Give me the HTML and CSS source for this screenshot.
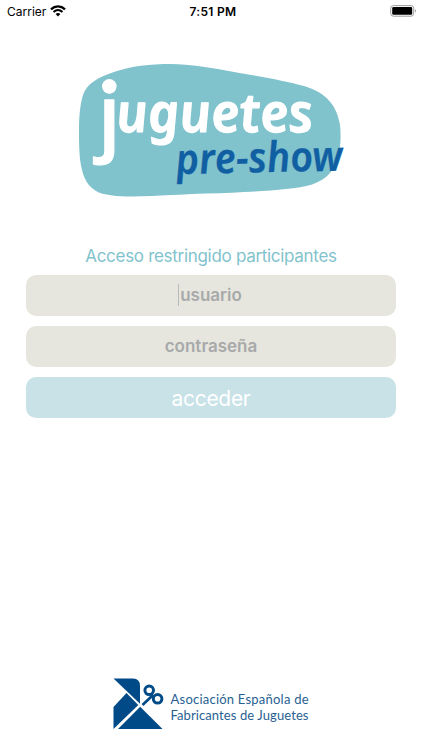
FILE: index.html
```html
<!DOCTYPE html>
<html lang="es">
<head>
    <meta charset="UTF-8">
    <meta name="viewport" content="width=device-width, initial-scale=1.0">
    <title>juguetes pre-show</title>
    <link rel="stylesheet" href="styles.css">
</head>
<body>
    <header class="status-bar">
        <div class="carrier">
            <span class="carrier-name">Carrier</span>
            <svg class="wifi" width="16" height="12" viewBox="0 0 16 12">
                <path d="M1 4.3C5 .5 11 .5 15 4.3" fill="none" stroke="#000" stroke-width="2.3"/>
                <path d="M3.5 7C6.2 4.6 9.8 4.6 12.5 7" fill="none" stroke="#000" stroke-width="2.1"/>
                <path d="M5.6 9Q8 7.1 10.4 9L8 11.5Z"/>
            </svg>
        </div>
        <span class="clock">7:51 PM</span>
        <svg class="battery" width="27" height="12" viewBox="0 0 27 12">
            <rect x=".7" y=".6" width="23" height="10.6" rx="2.7" fill="#fff" stroke="#9b9b9b"/>
            <rect x="2.2" y="2.1" width="20" height="7.6" rx="1.3"/>
            <path d="M25 4Q27 5.9 25 7.8Z" fill="#9b9b9b"/>
        </svg>
    </header>

    <main class="wrapper">
        <svg class="logo" width="272" height="140" viewBox="75 60 272 140">
            <path d="M79 130C79 117 80 105 83 95C87 83 99 77 114 72C131 66 150 64 171 64C189 64 213 68 234 72C263 77 286 81 304 86C328 93 337 107 340 125C342 145 339 162 330 173C321 184 306 187 286 189C251 193 201 193 152 196C129 197 106 197 96 191C85 184 82 174 80 159C79 149 79 140 79 130Z" fill="#81c3cd"/>
            <text class="logo-j" transform="translate(98 145)">j</text>
            <circle cx="109.3" cy="86.3" r="7.3" fill="#fff"/>
            <text class="logo-juguetes" transform="translate(118 132) skewX(7)" textLength="197" lengthAdjust="spacingAndGlyphs">uguetes</text>
            <text class="logo-show" transform="translate(177 174) rotate(-1.2) skewX(5)" textLength="167" lengthAdjust="spacingAndGlyphs">pre-show</text>
        </svg>

        <p class="intro">Acceso restringido participantes</p>

        <form class="login">
            <div class="field">
                <input type="text" placeholder="usuario" aria-label="usuario">
                <span class="caret"></span>
            </div>
            <div class="field">
                <input type="password" placeholder="contraseña" aria-label="contraseña">
            </div>
            <button type="button">acceder</button>
        </form>
    </main>

    <footer class="footer">
        <svg class="bird" width="51" height="52" viewBox="0 0 51 52">
            <g fill="#004b87">
                <path d="M3 .5H20Q27 .5 27 8V25.7L.5 .5Z"/>
                <path d="M13.5 15L25.3 27L.5 51V29Z"/>
                <path d="M27.2 28.7L49.5 51H5Z"/>
            </g>
            <g fill="none" stroke="#004b87">
                <path d="M29.5 27L40 17" stroke-width="2.7"/>
                <circle cx="36.2" cy="12.3" r="4.3" stroke-width="3"/>
                <circle cx="44.6" cy="20.8" r="4.3" stroke-width="3"/>
            </g>
        </svg>
        <svg class="association" width="144" height="36" viewBox="0 0 144 36">
            <text x=".5" y="15" textLength="138">Asociación Española de</text>
            <text x=".5" y="31" textLength="138">Fabricantes de Juguetes</text>
        </svg>
    </footer>
</body>
</html>
```

FILE: styles.css
```css
* {
    box-sizing: border-box;
}

body {
    margin: 0;
    height: 750px;
    display: flex;
    flex-direction: column;
    background-color: #fff;
    font-family: Inter, "Liberation Sans", sans-serif;
    overflow: hidden;
}

/* Status bar */
.status-bar {
    display: grid;
    grid-template-columns: 1fr auto 1fr;
    align-items: center;
    height: 22px;
    padding: 0 5px 0 7px;
    font-size: 12px;
    color: #000;
}

.carrier {
    display: flex;
    align-items: center;
    gap: 4px;
}

.clock {
    padding-left: 2px;
    font-weight: 600;
    letter-spacing: 0.3px;
}

.battery {
    justify-self: end;
}

/* Logo and form */
.wrapper {
    flex: 1;
    display: flex;
    flex-direction: column;
    align-items: center;
    padding: 38px 26px 0;
}

.logo {
    display: block;
    overflow: visible;
}

.logo-j,
.logo-juguetes,
.logo-show {
    font-family: "Noto Sans", sans-serif;
    font-weight: 600;
    font-style: italic;
    stroke-linejoin: round;
}

.logo-j,
.logo-juguetes {
    fill: #fff;
    stroke: #fff;
    stroke-width: 1.2px;
}

.logo-j {
    font-size: 84px;
    font-style: normal;
    font-weight: 500;
}

.logo-juguetes {
    font-size: 54px;
}

.logo-show {
    font-size: 42px;
    fill: #115fa3;
    stroke: #115fa3;
    stroke-width: 0.3px;
}

.intro {
    margin: 45px 0 8px;
    font-size: 17px;
    line-height: 22px;
    letter-spacing: -0.3px;
    color: #81c3cd;
}

.login {
    width: 100%;
    display: flex;
    flex-direction: column;
    gap: 10px;
}

.field {
    position: relative;
    height: 41px;
}

.field input {
    display: block;
    width: 100%;
    height: 100%;
    padding: 0 0 1px;
    border: none;
    border-radius: 10px;
    background-color: #e6e6df;
    font-family: inherit;
    font-size: 17px;
    font-weight: 600;
    text-align: center;
}

.field input::placeholder {
    color: #a8a9a9;
    opacity: 1;
}

.caret {
    position: absolute;
    left: 152px;
    top: 9px;
    width: 1px;
    height: 22px;
    background-color: #b9bbbb;
}

button {
    height: 41px;
    padding: 2px 0 0;
    border: none;
    border-radius: 10px;
    background-color: #c8e2e7;
    color: #fff;
    font-family: inherit;
    font-size: 21px;
    letter-spacing: -0.3px;
}

/* Association logo */
.footer {
    display: flex;
    justify-content: center;
    align-items: flex-end;
    gap: 6px;
    padding: 0 0 20px 5px;
}

.association {
    margin-bottom: 5px;
    font-family: Lato, sans-serif;
    font-size: 13px;
    fill: #285f93;
}
```
